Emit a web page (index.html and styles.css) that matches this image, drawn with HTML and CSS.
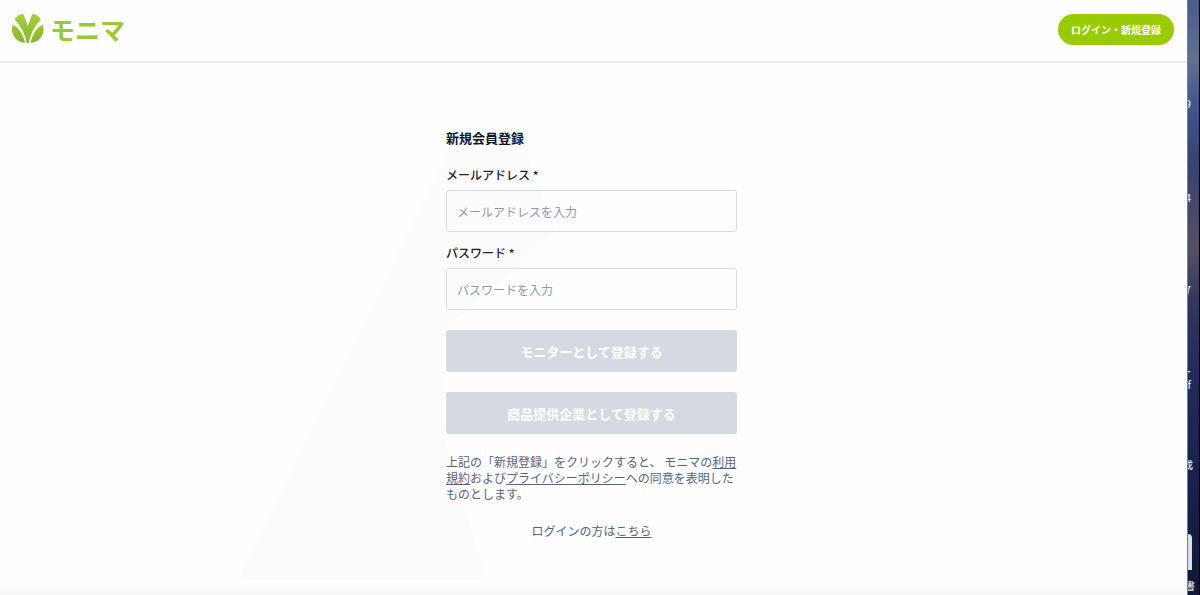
FILE: index.html
```html
<!DOCTYPE html>
<html lang="ja">
<head>
<meta charset="utf-8">
<meta name="viewport" content="width=device-width, initial-scale=1">
<title>モニマ</title>
<link rel="stylesheet" href="styles.css">
</head>
<body class="screen">
  <div class="window">
    <svg class="backdrop" viewBox="0 0 1187 595" preserveAspectRatio="xMinYMin slice" aria-hidden="true">
      <path d="M450 150H526L555 232L444 330V438L484 572Q485 580 476 580H248Q238 580 242 570Z" fill="#fcfcfc"/>
    </svg>
    <header class="header">
      <a class="brand" href="#">
        <svg class="brand-mark" viewBox="0 0 32 32" aria-hidden="true">
          <defs>
            <linearGradient id="leaf" x1="0" y1="0" x2="0" y2="32" gradientUnits="userSpaceOnUse">
              <stop offset="0" stop-color="#a8d038"/>
              <stop offset="1" stop-color="#84b62c"/>
            </linearGradient>
          </defs>
          <g fill="url(#leaf)">
            <path d="M3 5.500Q5.500 2.200 9.500 1Q11.300 .6 12 2.200L15.800 13L19.800 2.200Q20.500 .6 22.300 1Q26 2.200 28.500 5.500Q28.800 6.500 28 7.500Q19 17 16.800 30H14.700Q12.500 17 3.400 7.500Q2.500 6.500 3 5.500Z"/>
            <path d="M.7 11.500Q10 16 13.200 29.800Q7 29.500 3 25Q-1.500 19.500 .7 11.500Z"/>
            <path d="M30.900 11.500Q21.500 16 18.300 29.800Q24.500 29.500 28.500 25Q33 19.500 30.900 11.500Z"/>
          </g>
        </svg>
        <span class="brand-name">モニマ</span>
      </a>
      <button class="login" type="button">ログイン・新規登録</button>
    </header>
    <main class="main">
      <form class="form">
        <h1 class="title">新規会員登録</h1>
        <div class="field">
          <label class="label" for="email">メールアドレス *</label>
          <input class="input" id="email" type="email" placeholder="メールアドレスを入力">
        </div>
        <div class="field">
          <label class="label" for="password">パスワード *</label>
          <input class="input" id="password" type="password" placeholder="パスワードを入力">
        </div>
        <button class="submit" type="button" disabled>モニターとして登録する</button>
        <button class="submit" type="button" disabled>商品提供企業として登録する</button>
        <p class="terms">上記の「新規登録」をクリックすると、 モニマの<a class="link" href="#">利用規約</a>および<a class="link" href="#">プライバシーポリシー</a>への同意を表明したものとします。</p>
        <p class="signin">ログインの方は<a class="link" href="#">こちら</a></p>
      </form>
    </main>
  </div>
  <aside class="desktop" aria-hidden="true">
    <span class="caption caption-a">9</span>
    <span class="caption caption-b">4</span>
    <span class="caption caption-c">7</span>
    <span class="caption caption-d">ー</span>
    <span class="caption caption-e">f</span>
    <span class="caption caption-f">成</span>
    <span class="file"></span>
    <span class="caption caption-g">書</span>
  </aside>
</body>
</html>
```
FILE: styles.css
```css
* {
  box-sizing: border-box;
}

.screen {
  display: flex;
  min-height: 100vh;
  margin: 0;
  background: #fefefe;
  color: #1a202c;
  font-family: "Noto Sans CJK JP", sans-serif;
  font-size: 12px;
}

.window {
  position: relative;
  flex: 1;
  min-width: 0;
  background: linear-gradient(to top, #f6f8f8, #fefefe 14px);
}

.backdrop {
  position: absolute;
  inset: 0;
  width: 100%;
  height: 100%;
}

.header {
  position: relative;
  display: flex;
  align-items: center;
  justify-content: space-between;
  height: 63px;
  padding: 0 13px 3px 12px;
  border-bottom: 2px solid #e9ebf0;
}

.brand {
  display: flex;
  align-items: center;
  gap: 6px;
  text-decoration: none;
}

.brand-mark {
  width: 32px;
  height: 32px;
}

.brand-name {
  color: #9aca32;
  font-size: 25px;
  font-weight: 700;
  line-height: 32px;
}

.login {
  height: 31px;
  padding: 0 13px;
  border: 0;
  border-radius: 16px;
  background: #99cc00;
  color: #fff;
  font: inherit;
  font-size: 10px;
  font-weight: 700;
}

.main {
  position: relative;
  padding: 65px 4px 40px 0;
}

.form {
  width: 100%;
  max-width: 291px;
  margin: 0 auto;
}

.title {
  margin: 0 0 18px;
  color: #10162a;
  font-size: 13px;
  line-height: 20px;
}

.field {
  margin-bottom: 12px;
}

.label {
  display: block;
  margin-bottom: 6px;
  font-weight: 500;
  line-height: 18px;
}

.input {
  display: block;
  width: 100%;
  height: 42px;
  padding: 0 10px;
  border: 1px solid #d8dce8;
  border-radius: 3px;
  background: transparent;
  color: inherit;
  font: inherit;
}

.input::placeholder {
  color: #8c9aae;
  opacity: 1;
}

.submit {
  display: block;
  width: 100%;
  height: 42px;
  margin-top: 20px;
  padding: 0;
  border: 0;
  border-radius: 3px;
  background: #d4d9e2;
  color: #fff;
  font: inherit;
  font-size: 13px;
  font-weight: 700;
}

.terms,
.signin {
  margin: 20px 0 0;
  color: #566479;
  line-height: 17px;
}

.terms {
  line-height: 16px;
}

.signin {
  text-align: center;
}

.link {
  color: inherit;
  text-decoration: underline;
}

.desktop {
  position: relative;
  width: 13px;
  overflow: hidden;
  border-right: 1px solid #000;
  border-left: 1px solid #737e9b;
  background: linear-gradient(#455e8b, #60708f 10%, #3f568b 18%, #35436f 28%, #484a6b 36%, #555066 42%, #34385f 50%, #222b5b 62%, #18214d 82%, #111839);
}

.caption {
  position: absolute;
  right: 8px;
  color: #e2e5ed;
  font-size: 10px;
  font-weight: 500;
  line-height: 12px;
}

.caption-a {
  top: 98px;
}

.caption-b {
  top: 192px;
}

.caption-c {
  top: 284px;
}

.caption-d {
  top: 366px;
}

.caption-e {
  top: 379px;
}

.caption-f {
  top: 459px;
  right: 6px;
}

.caption-g {
  top: 580px;
  right: 4px;
}

.file {
  position: absolute;
  top: 534px;
  left: 0;
  width: 4px;
  height: 36px;
  border-radius: 0 4px 0 0;
  background: #dce0e2;
}
```
